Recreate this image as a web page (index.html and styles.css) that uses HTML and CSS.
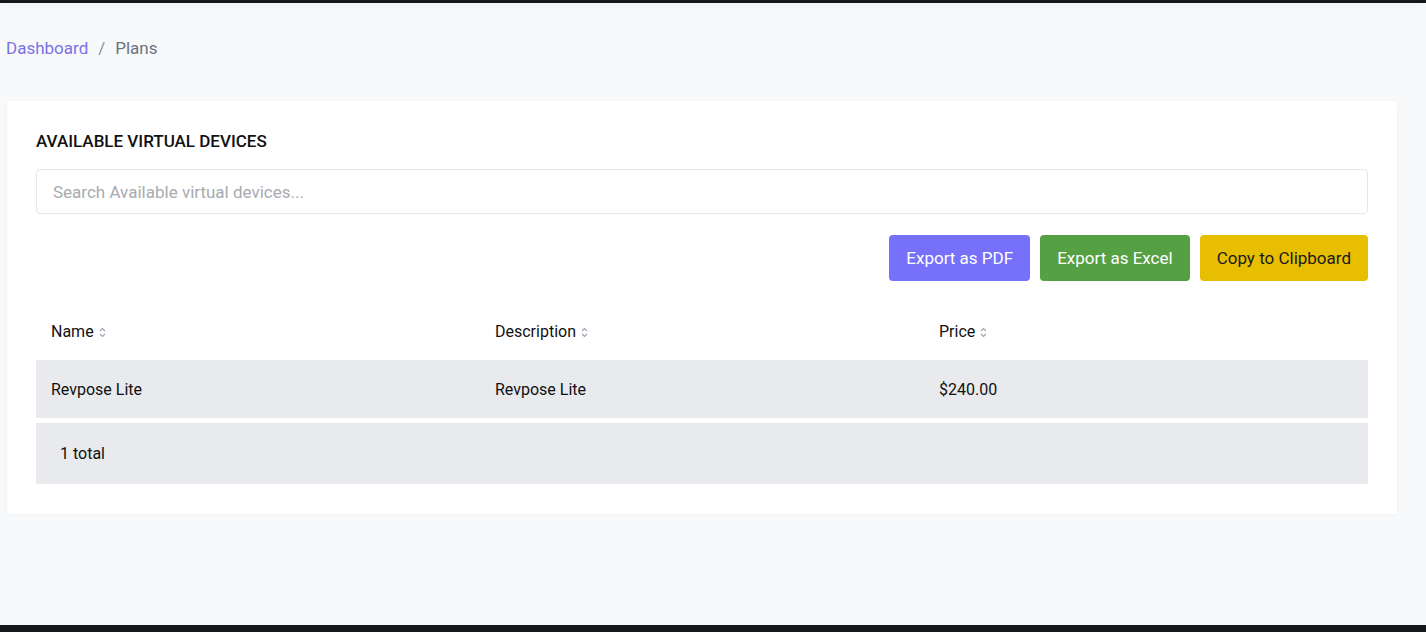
FILE: index.html
```html
<!DOCTYPE html>
<html lang="en">
<head>
    <meta charset="UTF-8">
    <title>Plans</title>
    <link rel="stylesheet" href="styles.css">
</head>
<body>
<div class="page">
    <div class="topbar"></div>
    <main class="main">
        <nav class="crumbs">
            <a href="#">Dashboard</a>
            <span class="sep">/</span>
            <span class="current">Plans</span>
        </nav>
        <section class="card">
            <h2 class="card-title">AVAILABLE VIRTUAL DEVICES</h2>
            <input class="search" type="text" placeholder="Search Available virtual devices...">
            <div class="actions">
                <button class="btn btn-pdf">Export as PDF</button>
                <button class="btn btn-excel">Export as Excel</button>
                <button class="btn btn-copy">Copy to Clipboard</button>
            </div>
            <table class="grid">
                <thead>
                <tr>
                    <th>Name <svg class="sort" width="7" height="11" viewBox="0 0 7 11"><path d="M1 4 L3.5 1.5 L6 4 M1 7 L3.5 9.5 L6 7" fill="none" stroke="#9ca3af" stroke-width="1.1"/></svg></th>
                    <th>Description <svg class="sort" width="7" height="11" viewBox="0 0 7 11"><path d="M1 4 L3.5 1.5 L6 4 M1 7 L3.5 9.5 L6 7" fill="none" stroke="#9ca3af" stroke-width="1.1"/></svg></th>
                    <th>Price <svg class="sort" width="7" height="11" viewBox="0 0 7 11"><path d="M1 4 L3.5 1.5 L6 4 M1 7 L3.5 9.5 L6 7" fill="none" stroke="#9ca3af" stroke-width="1.1"/></svg></th>
                </tr>
                </thead>
                <tbody>
                <tr>
                    <td>Revpose Lite</td>
                    <td>Revpose Lite</td>
                    <td>$240.00</td>
                </tr>
                </tbody>
            </table>
            <div class="total">1 total</div>
        </section>
    </main>
    <div class="bottombar"></div>
</div>
</body>
</html>
```

FILE: styles.css
```css
*{
    margin: 0;
    padding: 0;
    box-sizing: border-box;
}
body{
    background: #f8f9fb;
    font-family: Roboto, "Liberation Sans", Arial, sans-serif;
    color: #111;
}
a{
    text-decoration: none;
}
.page{
    display: flex;
    flex-direction: column;
    min-height: 100vh;
}
.topbar{
    height: 3px;
    background: #16171a;
    box-shadow: 0 3px 6px rgba(0,0,0,0.06);
}
.main{
    flex: 1;
    padding: 0 29px 0 6px;
}
.crumbs{
    display: flex;
    align-items: center;
    height: 20px;
    margin-top: 35px;
    font-size: 17px;
    line-height: 20px;
}
.crumbs a{
    color: #7b72e6;
}
.crumbs .sep{
    color: #8a8f98;
    margin: 0 10px;
}
.crumbs .current{
    color: #6b7280;
}
.card{
    margin: 43px 0 0 1px;
    background: #fff;
    padding: 30px 29px 30px 29px;
    box-shadow: 0 1px 6px rgba(0,0,0,0.03);
}
.card-title{
    font-size: 17px;
    font-weight: 500;
    line-height: 20px;
    color: #111;
}
.search{
    display: block;
    width: 100%;
    height: 45px;
    margin-top: 18px;
    border: 1px solid #e5e7eb;
    border-radius: 4px;
    padding: 0 16px;
    font-family: inherit;
    font-size: 17px;
    color: #111;
    outline: none;
}
.search::placeholder{
    color: #a8abb0;
}
.actions{
    display: flex;
    justify-content: flex-end;
    gap: 10px;
    margin-top: 21px;
}
.btn{
    height: 46px;
    padding: 0 17px;
    border: 0;
    border-radius: 4px;
    font-family: inherit;
    font-size: 17px;
    cursor: pointer;
}
.btn-pdf{
    background: #7670fa;
    color: #fff;
}
.btn-excel{
    background: #56a044;
    color: #fff;
}
.btn-copy{
    background: #e7bf00;
    color: #1a1a1a;
}
.grid{
    width: 100%;
    table-layout: fixed;
    border-collapse: collapse;
    margin-top: 21px;
    font-size: 16px;
}
.grid th{
    height: 58px;
    padding: 0 15px;
    text-align: left;
    font-weight: 400;
    color: #111;
}
.grid td{
    height: 58px;
    padding: 0 15px;
    background: #e9eaed;
    color: #111;
}
.sort{
    vertical-align: -1px;
    margin-left: 1px;
}
.total{
    margin-top: 5px;
    height: 61px;
    line-height: 61px;
    padding-left: 24px;
    background: #e9eaed;
    font-size: 16px;
}
.bottombar{
    height: 7px;
    background: #16171a;
}
```
